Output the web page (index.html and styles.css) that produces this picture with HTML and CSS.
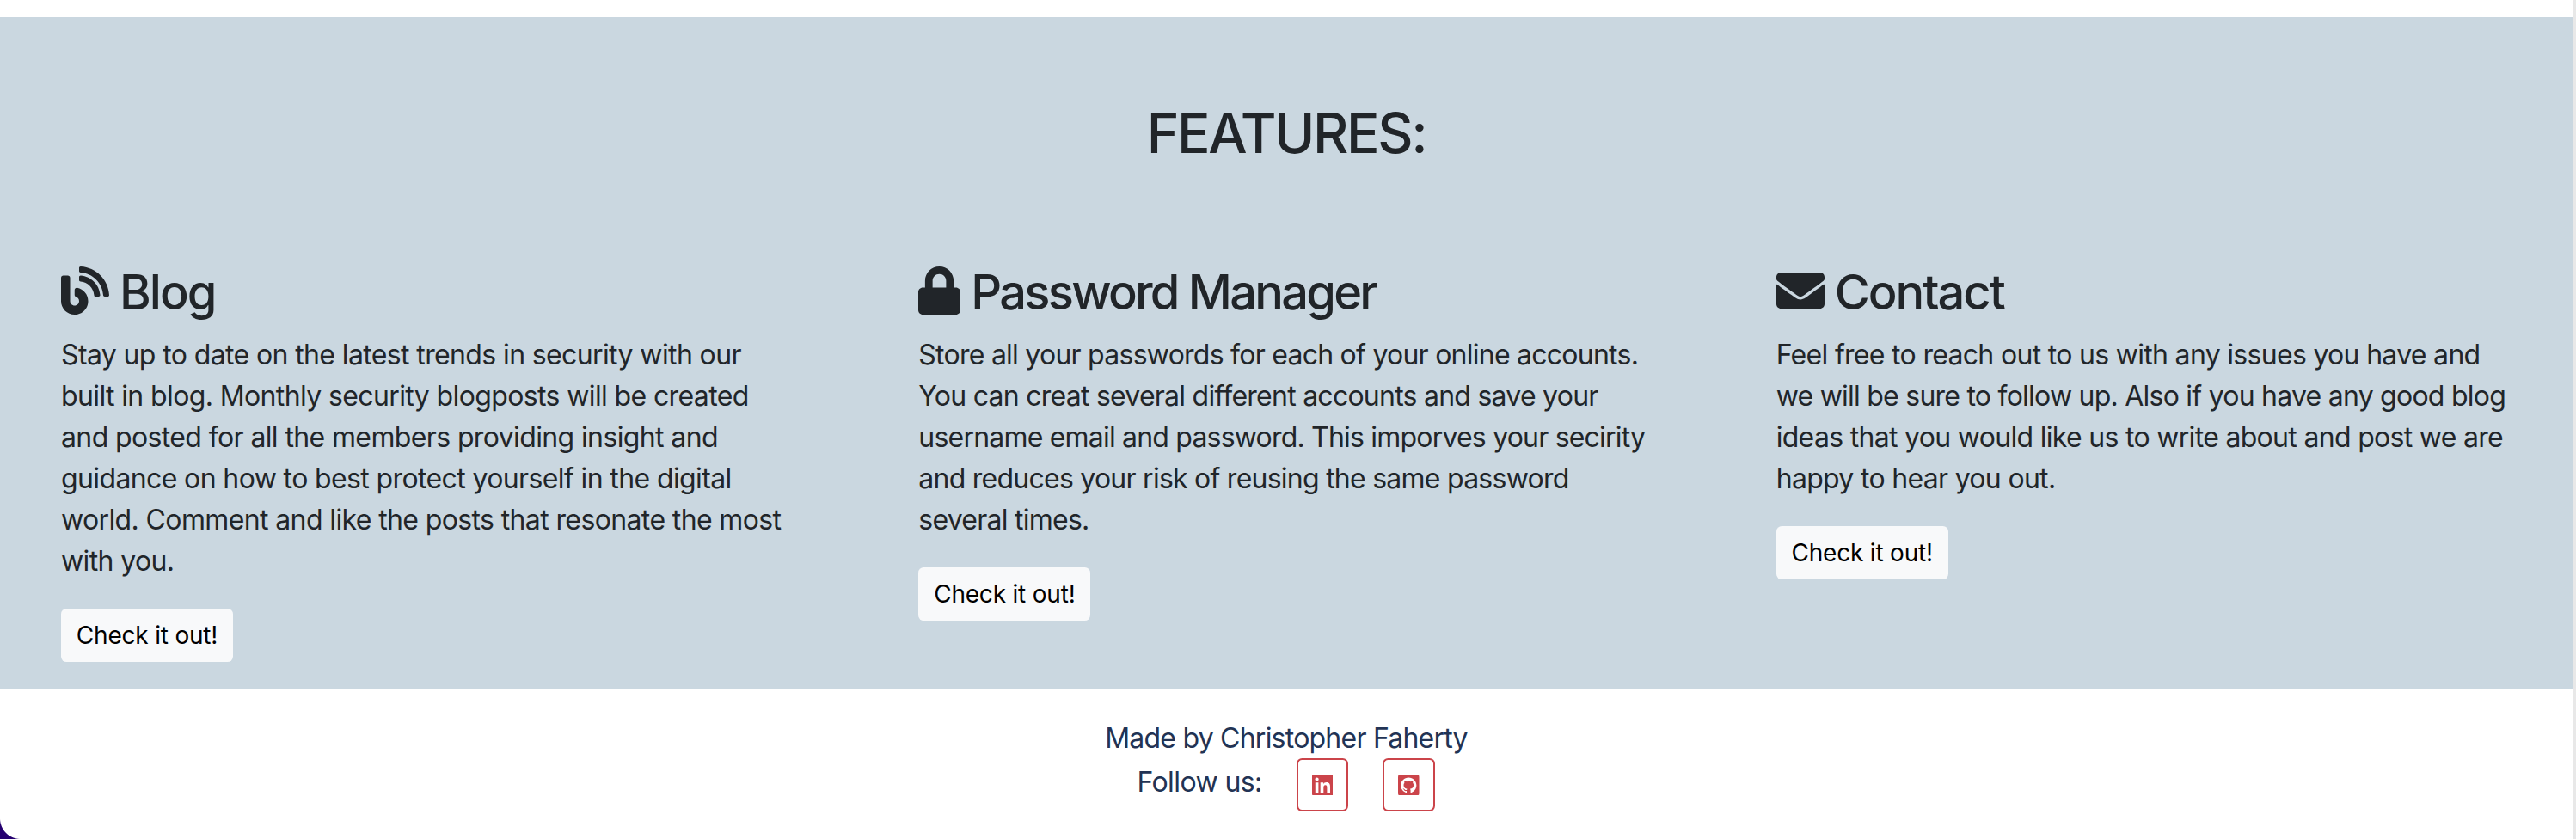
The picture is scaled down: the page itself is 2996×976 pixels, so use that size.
FILE: index.html
```html
<!DOCTYPE html>
<html lang="en">
<head>
<meta charset="utf-8">
<title>Features</title>
<link rel="stylesheet" href="styles.css">
</head>
<body>
<main class="page">
  <section class="features">
    <h1 class="features-title">FEATURES:</h1>
    <div class="feature-grid">
      <article class="feature">
        <h2 class="feature-title"><svg class="icon icon-square" viewBox="0 0 512 512"><path d="M172.2 226.8c-14.6-2.9-28.2 8.900-28.2 23.800V301c0 10.200 7.100 18.400 16.700 22 18.200 6.800 31.300 24.400 31.300 45 0 26.500-21.500 48-48 48s-48-21.500-48-48V120c0-13.300-10.700-24-24-24H24c-13.300 0-24 10.700-24 24v248c0 89.500 82.100 160.200 175 140.700 54.400-11.400 98.300-55.400 109.700-109.700 17.400-82.900-37-157.200-112.500-172.200zM209 0c-9.200-.5-17 6.800-17 16v31.600c0 8.500 6.600 15.500 15 15.900 129.400 7 233.400 112 240.900 241.500.5 8.400 7.500 15 15.900 15h32.100c9.200 0 16.500-7.800 16-17C503.400 139.800 372.200 8.600 209 0zm.3 96c-9.300-.7-17.300 6.700-17.300 16.100v32.100c0 8.400 6.500 15.300 14.800 15.900 76.800 6.300 138 68.200 144.900 145.200.8 8.300 7.600 14.700 15.900 14.700h32.200c9.300 0 16.800-8 16.100-17.300-8.400-110.100-96.500-198.200-206.600-206.700z"/></svg><span>Blog</span></h2>
        <p class="feature-text">Stay up to date on the latest trends in security with our<br>built in blog. Monthly security blogposts will be created<br>and posted for all the members providing insight and<br>guidance on how to best protect yourself in the digital<br>world. Comment and like the posts that resonate the most<br>with you.</p>
        <a class="button">Check it out!</a>
      </article>
      <article class="feature feature-passwords">
        <h2 class="feature-title"><svg class="icon icon-narrow" viewBox="0 0 448 512"><path d="M400 224h-24v-72C376 68.200 307.800 0 224 0S72 68.200 72 152v72H48c-26.500 0-48 21.500-48 48v192c0 26.500 21.500 48 48 48h352c26.500 0 48-21.500 48-48V272c0-26.500-21.500-48-48-48zm-104 0H152v-72c0-39.700 32.300-72 72-72s72 32.300 72 72v72z"/></svg><span>Password Manager</span></h2>
        <p class="feature-text">Store all your passwords for each of your online accounts.<br>You can creat several different accounts and save your<br><span class="snug">username email and password. This imporves your secirity</span><br>and reduces your risk of reusing the same password<br>several times.</p>
        <a class="button">Check it out!</a>
      </article>
      <article class="feature feature-contact">
        <h2 class="feature-title"><svg class="icon icon-square" viewBox="0 0 512 512"><path d="M502.300 190.800c3.900-3.100 9.700-.2 9.700 4.700V400c0 26.500-21.500 48-48 48H48c-26.500 0-48-21.500-48-48V195.600c0-5 5.700-7.800 9.700-4.700 22.400 17.400 52.100 39.500 154.100 113.600 21.100 15.400 56.700 47.800 92.200 47.600 35.700.3 72-32.800 92.300-47.600 102-74.100 131.600-96.300 154-113.700zM256 320c23.200.4 56.600-29.200 73.400-41.400 132.700-96.300 142.800-104.700 173.400-128.700 5.800-4.500 9.200-11.500 9.200-18.900v-19c0-26.500-21.500-48-48-48H48c-26.500 0-48 21.500-48 48v19c0 7.400 3.400 14.300 9.200 18.900 30.600 23.900 40.700 32.400 173.400 128.700 16.800 12.200 50.200 41.800 73.400 41.400z"/></svg><span>Contact</span></h2>
        <p class="feature-text">Feel free to reach out to us with any issues you have and<br><span class="snug">we will be sure to follow up. Also if you have any good blog</span><br>ideas that you would like us to write about and post we are<br>happy to hear you out.</p>
        <a class="button">Check it out!</a>
      </article>
    </div>
  </section>
  <footer class="footer">
    <div class="credit">Made by Christopher Faherty</div>
    <div class="follow">
      <span class="follow-label">Follow us:</span>
      <a class="social"><svg class="social-icon" viewBox="0 32 448 448"><path d="M416 32H31.900C14.300 32 0 46.500 0 64.300v383.400C0 465.500 14.300 480 31.900 480H416c17.600 0 32-14.500 32-32.300V64.300c0-17.800-14.400-32.300-32-32.300zM135.400 416H69V202.200h66.500V416zm-33.200-243c-21.300 0-38.500-17.300-38.500-38.500S80.900 96 102.200 96c21.200 0 38.500 17.300 38.500 38.500 0 21.300-17.200 38.500-38.500 38.500zm282.100 243h-66.400V312c0-24.800-.5-56.700-34.500-56.700-34.600 0-39.900 27-39.900 54.900V416h-66.400V202.200h63.700v29.200h.9c8.900-16.800 30.600-34.500 62.900-34.500 67.200 0 79.700 44.300 79.700 101.900V416z"/></svg></a>
      <a class="social"><svg class="social-icon" viewBox="0 0 448 448"><rect width="448" height="448" rx="48"/><path class="cat" transform="translate(58 59) scale(.65)" d="M256 8C114 8 0 122 0 264c0 113 73 209 175 243 13 2 18-6 18-12v-48c-71 15-86-30-86-30-12-30-28-38-28-38-23-16 2-15 2-15 26 2 39 26 39 26 23 39 60 28 75 21 2-16 9-28 16-34-57-6-117-28-117-127 0-28 10-51 26-69-3-6-11-32 3-68 0 0 21-7 70 26 41-11 87-11 128 0 49-33 70-26 70-26 14 36 6 62 3 68 16 18 26 41 26 69 0 99-60 121-117 127 9 8 17 24 17 47v71c0 6 5 14 18 12 102-34 174-130 174-243C512 122 398 8 256 8z"/></svg></a>
    </div>
  </footer>
  <div class="window-corner"></div>
</main>
</body>
</html>
```
FILE: styles.css
```css
* { box-sizing: border-box; }
body {
  margin: 0;
  background: #fff;
  color: #212529;
  font: 400 32px/48px Inter, sans-serif;
}
.page {
  position: relative;
  height: 976px;
  padding-top: 20px;
  border-right: 4px solid #e8e8e8;
  overflow: hidden;
}
.features {
  height: 782px;
  padding-top: 97px;
  background: #cad7e0;
}
.features-title {
  margin: 0 0 111px;
  font-size: 64px;
  font-weight: 530;
  line-height: 76.8px;
  letter-spacing: -2.4px;
  text-align: center;
}
.feature-grid {
  display: grid;
  grid-template-columns: repeat(3, minmax(0, 1fr));
}
.feature {
  padding-left: 71px;
  letter-spacing: -.62px;
}
.feature-passwords { letter-spacing: -.75px; }
.feature-contact { letter-spacing: -.69px; }
.feature-passwords .snug { letter-spacing: -.8px; }
.feature-contact .snug { letter-spacing: -.76px; }
.feature-title {
  display: flex;
  align-items: center;
  gap: 12px;
  margin: 0 0 16px;
  font-size: 56px;
  font-weight: 530;
  line-height: 67.2px;
  letter-spacing: -2px;
  white-space: nowrap;
}
.feature-title span { padding-top: 2px; margin-bottom: -2px; }
.feature-passwords .feature-title { letter-spacing: -2.75px; }
.icon { height: 56px; fill: currentColor; flex: none; }
.icon-square { width: 56px; }
.icon-narrow { width: 49px; }
.feature-title + .feature-text { margin: 17px 0 31px; white-space: nowrap; }
.button {
  display: flex;
  align-items: center;
  justify-content: center;
  width: 200px;
  height: 62px;
  border-radius: 6.4px;
  background: #f8f9fa;
  color: #000;
  font-size: 28px;
  line-height: 42px;
  letter-spacing: -.2px;
  white-space: nowrap;
}
.footer {
  padding-top: 32px;
  color: #223354;
  text-align: center;
}
.credit {
  height: 48px;
  padding-top: 1px;
  letter-spacing: -.77px;
}
.follow {
  display: flex;
  justify-content: center;
  gap: 40px;
  padding-right: 1px;
}
.follow-label {
  width: 145px;
  padding-top: 4px;
  letter-spacing: -.6px;
  text-align: left;
  white-space: nowrap;
}
.social {
  display: flex;
  align-items: center;
  justify-content: center;
  width: 60.5px;
  height: 62px;
  border: 2px solid #cb444a;
  border-radius: 6.4px;
}
.social-icon { width: 24.5px; height: 24.5px; fill: #cb444a; }
.cat { fill: #fff; }
.window-corner {
  position: absolute;
  left: 0;
  bottom: 0;
  width: 24px;
  height: 24px;
  background: radial-gradient(circle at 100% 0, transparent 23.5px, #250070 24.5px);
}
```
